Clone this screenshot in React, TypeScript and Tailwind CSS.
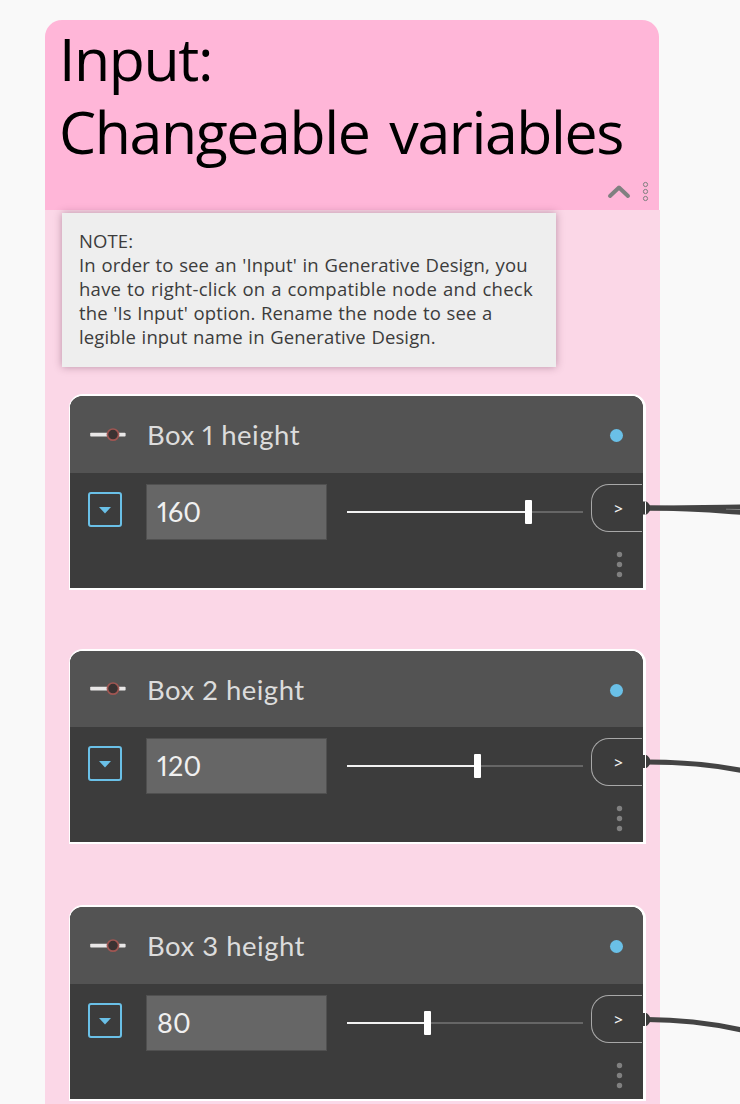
type NodeProps = {
  label: string;
  value: number;
  thumb: number;
  className: string;
  headerClassName: string;
};

function SliderGlyph() {
  return (
    <svg className="block h-[16px] w-[38px]" viewBox="0 0 38 16">
      <rect x="1.2" y="5.7" width="35.4" height="3.8" rx="0.8" fill="#e9e7e7" />
      <circle cx="24" cy="7.6" r="5.6" fill="#3a3232" stroke="#a05652" strokeWidth="1.7" />
    </svg>
  );
}

function NumberNode({ label, value, thumb, className, headerClassName }: NodeProps) {
  return (
    <section
      className={`ml-6 w-[577px] shrink-0 overflow-hidden rounded-t-[14px] border-y-2 border-r-[3px] border-l border-white bg-[#3c3c3c] ${className}`}
    >
      <header className={`flex items-center bg-[#535353] pr-5 pl-[19px] ${headerClassName}`}>
        <SliderGlyph />
        <h2 className="ml-[20px] flex-1 pt-px font-['Lato',sans-serif] text-[27.5px] leading-[36px] tracking-[0.5px] whitespace-nowrap text-[#dcdcdc] proportional-nums">
          {label}
        </h2>
        <span className="mt-[2px] size-[13px] rounded-full bg-[#6ac0e7]" />
      </header>
      <div className="flex items-start pt-[11px] pl-[18px]">
        <button className="mt-[8px] flex h-[35px] w-[34px] items-center justify-center rounded-[3px] border-[2.5px] border-[#6ac0e7]">
          <svg className="mt-px h-[7px] w-[12px]" viewBox="0 0 12 7">
            <path d="M0 0H12L6 6.5Z" fill="#6ac0e7" />
          </svg>
        </button>
        <div className="ml-[24px] flex h-[56px] w-[181px] items-center border border-[#505050] bg-[#666666] pt-px pl-[10px] font-['Lato',sans-serif] text-[27px] tracking-[0.2px] text-[#f0f0f0] proportional-nums">
          {value}
        </div>
        <div className="mt-[16px] ml-5 flex h-6 w-[236px] items-center">
          <span className="h-[2px] bg-[#f2f2f2]" style={{ width: thumb }} />
          <span className="h-6 w-[7px] rounded-[1px] bg-white" />
          <span className="h-[2px] flex-1 bg-[#666666]" />
        </div>
        <div className="ml-2 flex w-[51px] flex-col">
          <div className="flex h-[48px] items-center justify-center rounded-l-[18px] border border-r-0 border-[#a8a8a8] pt-px pl-[3px] font-['Noto_Sans',sans-serif] text-[15px] font-medium text-[#f2f2f2]">
            &gt;
          </div>
          <svg className="mt-[18px] ml-[24px] h-[30px] w-[10px]" viewBox="0 0 10 30" fill="#808080">
            <circle cx="4.5" cy="4.5" r="2.7" />
            <circle cx="4.5" cy="14.5" r="2.7" />
            <circle cx="4.5" cy="24.5" r="2.7" />
          </svg>
        </div>
      </div>
    </section>
  );
}

function Wires() {
  return (
    <svg className="pointer-events-none absolute top-0 left-0 h-[1104px] w-[740px]" viewBox="0 0 740 1104" fill="none">
      <g stroke="#444444" strokeWidth="5">
        <path d="M647 508C690 508 710 507.5 742 507" />
        <path d="M647 508C690 508 710 510 742 512.5" />
        <path d="M647 762C685 762 712 764.5 742 770.5" />
        <path d="M647 1019.5C685 1019.5 712 1023.5 742 1030" />
      </g>
      <path d="M726 509.2L742 509.6" stroke="#858585" strokeWidth="0.8" />
      {[508, 761.5, 1019.5].map((y) => (
        <g key={y}>
          <path d={`M643 ${y - 6.5}h3q1.5 0 4 4v5q-2.5 4-4 4h-3z`} fill="#3c3c3c" />
          <path d={`M645.5 ${y - 6.5}v13`} stroke="#fff" strokeWidth="1" />
        </g>
      ))}
    </svg>
  );
}

export default function App() {
  return (
    <main className="relative h-[1104px] w-[740px] overflow-hidden bg-[#f9f9f9] pt-5 pl-[45px]">
      <div className="flex h-[1084px] w-[615px] flex-col">
        <header className="flex h-[190px] w-[614px] shrink-0 flex-col rounded-t-[17px] bg-[#ffb6d8]">
          <h1 className="pt-[2px] pl-[14px] font-['Open_Sans','Noto_Sans',sans-serif] text-[59px] leading-[73px] tracking-[-1.4px] [word-spacing:6px] whitespace-nowrap text-black">
            Input:
            <br />
            Changeable variables
          </h1>
          <div className="mt-[13px] flex items-center justify-end gap-[11px] pr-[10px]">
            <svg className="h-[16px] w-[24px]" viewBox="0 0 24 16" fill="none">
              <path d="M3 12L12 3.5L21 12" stroke="#808080" strokeWidth="4" strokeLinecap="round" strokeLinejoin="round" />
            </svg>
            <svg className="h-[21px] w-[7px]" viewBox="0 0 7 21" fill="none" stroke="#808080" strokeWidth="1">
              <circle cx="3.5" cy="3.5" r="2.1" />
              <circle cx="3.5" cy="10.5" r="2.1" />
              <circle cx="3.5" cy="17.5" r="2.1" />
            </svg>
          </div>
        </header>
        <div className="flex w-[615px] flex-1 flex-col bg-[#fbd7e7] pt-[3px]">
          <aside className="ml-[17px] h-[154px] w-[494px] shrink-0 bg-[#eeeeee] pt-[16px] pl-[17px] font-['Open_Sans','Noto_Sans',sans-serif] text-[18.5px] leading-6 tracking-[0.12px] [word-spacing:0.7px] whitespace-nowrap text-[#3c3c3c] shadow-[0_0_8px_rgba(90,40,70,0.4)]">
            <p>NOTE:</p>
            <p>In order to see an 'Input' in Generative Design, you</p>
            <p className="tracking-[0.25px]">have to right-click on a compatible node and check</p>
            <p>the 'Is Input' option. Rename the node to see a</p>
            <p>legible input name in Generative Design.</p>
          </aside>
          <NumberNode label="Box 1 height" value={160} thumb={178} className="mt-[27px] h-[196px]" headerClassName="h-[77px]" />
          <NumberNode label="Box 2 height" value={120} thumb={127} className="mt-[59px] h-[195px]" headerClassName="h-[76px]" />
          <NumberNode label="Box 3 height" value={80} thumb={77} className="mt-[61px] h-[196px]" headerClassName="h-[77px]" />
        </div>
      </div>
      <Wires />
    </main>
  );
}
